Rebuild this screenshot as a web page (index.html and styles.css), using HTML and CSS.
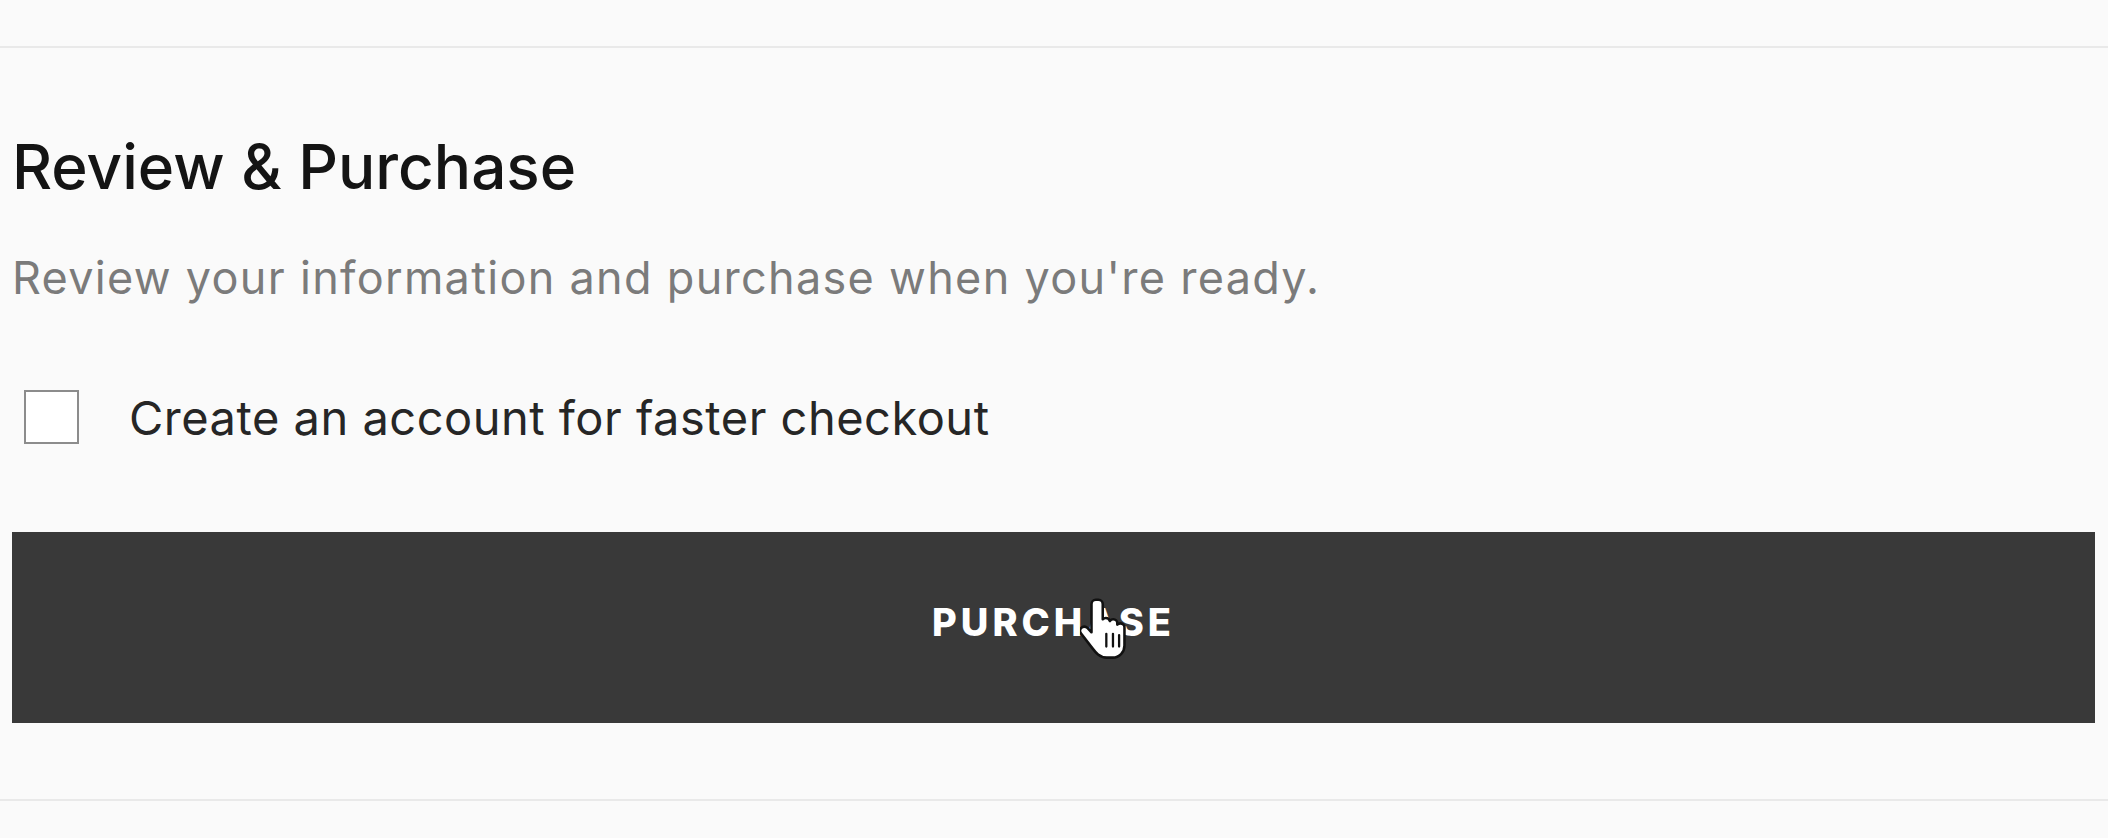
FILE: index.html
```html
<!DOCTYPE html>
<html>
<head>
<meta charset="utf-8">
<link rel="stylesheet" href="styles.css">
</head>
<body>
<div class="rule"></div>
<section class="review">
  <h2 class="title">Review &amp; Purchase</h2>
  <p class="subtitle">Review your information and purchase when you're ready.</p>
  <label class="option">
    <span class="box"></span>
    <span class="option-text">Create an account for faster checkout</span>
  </label>
  <button class="purchase" type="button">
    <span class="purchase-label">PURCHASE</span>
    <svg class="cursor" viewBox="0 0 18 26" width="46" height="68" aria-hidden="true">
      <path d="M6.2 1.2c-1 0-1.7.8-1.7 1.7v11l-1.6-1.7c-.7-.7-1.8-.7-2.4 0-.6.6-.6 1.6 0 2.3l4.4 5.7c1.2 1.6 2.7 3.6 5.6 3.6h2.3c2.6 0 4.6-2.1 4.6-4.7v-7.1c0-.9-.7-1.6-1.6-1.6-.5 0-.9.2-1.2.5v-.5c0-.9-.7-1.6-1.6-1.6-.6 0-1 .3-1.3.7-.2-.7-.8-1.2-1.6-1.2-.5 0-.9.2-1.2.5V2.9c0-.9-.7-1.7-1.7-1.7z" fill="#fff" stroke="#111" stroke-width="1" stroke-linejoin="round"/>
      <path d="M10.3 14.5v5M12.9 14.5v5M15.3 15v4.5" stroke="#111" stroke-width="0.9" fill="none" stroke-linecap="round"/>
    </svg>
  </button>
</section>
<div class="rule rule-bottom"></div>
</body>
</html>
```

FILE: styles.css
```css
html, body {
  margin: 0;
  padding: 0;
  background: #fafafa;
}

body {
  font-family: Inter, "Liberation Sans", Arial, sans-serif;
  width: 2108px;
  height: 838px;
  overflow: hidden;
}

.rule {
  height: 2px;
  background: #e9e9e9;
  margin-top: 46px;
}

.rule-bottom {
  margin-top: 76px;
}

.review {
  padding: 0 13px 0 12px;
  display: flex;
  flex-direction: column;
}

.title {
  margin: 88px 0 0 0;
  font-size: 62px;
  line-height: 62px;
  font-weight: 500;
  color: #141414;
  letter-spacing: 0px;
}

.subtitle {
  margin: 57px 0 0 0;
  font-size: 45px;
  line-height: 45px;
  font-weight: 400;
  color: #7b7b7b;
  letter-spacing: 1.3px;
}

.option {
  display: flex;
  align-items: center;
  gap: 50px;
  margin-top: 90px;
  padding-left: 12px;
}

.box {
  width: 51px;
  height: 50px;
  border: 2px solid #8c8c8c;
  background: #fff;
  flex: none;
}

.option-text {
  font-size: 47px;
  line-height: 47px;
  color: #262626;
  letter-spacing: 0.5px;
}

.purchase {
  position: relative;
  margin-top: 88px;
  height: 191px;
  border: none;
  background: #393939;
  color: #fff;
  display: flex;
  align-items: center;
  justify-content: center;
  font-family: Inter, "Liberation Sans", Arial, sans-serif;
  padding: 0;
}

.purchase-label {
  font-size: 38px;
  font-weight: 800;
  letter-spacing: 4px;
  line-height: 1;
  margin-top: -12px;
}

.cursor {
  position: absolute;
  left: 1068px;
  top: 64px;
}
```
